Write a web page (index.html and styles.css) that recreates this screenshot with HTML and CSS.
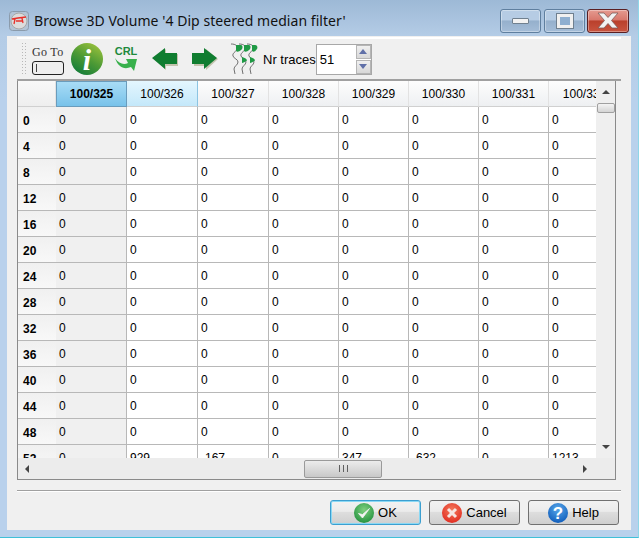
FILE: index.html
```html
<!DOCTYPE html>
<html>
	<head>
		<meta charset="UTF-8">
		<title>Browse 3D Volume</title>
		<link rel="stylesheet" href="styles.css">
	</head>
	<body>
		<div class="window">
			<div class="titlebar">
				<svg class="appicon" width="20" height="20" viewBox="0 0 20 20">
					<rect x="0.5" y="0.5" width="19" height="19" rx="3" fill="#b3c4d6" stroke="#8b9bab"/>
					<circle cx="10" cy="10" r="8" fill="#dcdcdc" stroke="#a8a8a8"/>
					<path d="M3 8 L9 7 L17 6 M6 8 L5 13 M13 7 L14 12 M7 10 L13 10" fill="none" stroke="#e8302a" stroke-width="1.3"/>
				</svg>
				<div class="titletext">Browse 3D Volume '4 Dip steered median filter'</div>
				<div class="winbtn winmin"><span class="minbar"></span></div>
				<div class="winbtn winmax"><span class="maxbox"></span></div>
				<div class="winbtn winclose">
					<svg width="26" height="18" viewBox="0 0 26 18">
						<path d="M3 1 H9 L13 5.5 L17 1 H23 L16.5 8.5 L23 16 H17 L13 11.5 L9 16 H3 L9.5 8.5 Z" fill="#f2f2f2" stroke="#7d5a58" stroke-width="0.8"/>
					</svg>
				</div>
			</div>

			<div class="client">
				<div class="toolbar">
					<div class="grip"></div>
					<div class="goto">
						<div class="gotolabel">Go To</div>
						<div class="gotofield"><span></span></div>
					</div>
					<svg class="tool-info" width="32" height="32" viewBox="0 0 32 32">
						<defs>
							<linearGradient id="infogreen" x1="0.8" y1="0" x2="0.2" y2="1">
								<stop offset="0" stop-color="#9cc23c"/>
								<stop offset="0.5" stop-color="#4d9a35"/>
								<stop offset="1" stop-color="#0f7a3a"/>
							</linearGradient>
						</defs>
						<circle cx="16" cy="16" r="16" fill="url(#infogreen)"/>
						<text x="16" y="27" text-anchor="middle" class="infoglyph">i</text>
					</svg>
					<svg class="tool-crl" width="24" height="28" viewBox="0 -1 24 28">
						<text x="12" y="9" text-anchor="middle" class="crlglyph">CRL</text>
						<path d="M1 12 C5 18 10 19 14 17 L12 13 L23 13 L20 25 L17 21 C10 24 4 21 1 12 Z" fill="#38b04c"/>
					</svg>
					<svg class="tool-arrow" width="28" height="24" viewBox="0 0 28 24">
						<path d="M3 12 L15 2 V7 H27 V19 H15 V23 Z" fill="#b8b89c" opacity="0.8"/>
						<path d="M1 11 L14 1 V6 H26 V17 H14 V22 Z" fill="#107d30"/>
					</svg>
					<svg class="tool-arrow tool-right" width="28" height="24" viewBox="0 0 28 24">
						<path d="M3 7 H15 V2 L27 12 L15 23 V19 H3 Z" fill="#b8b89c" opacity="0.8"/>
						<path d="M1 6 H13 V1 L26 11 L13 22 V17 H1 Z" fill="#107d30"/>
					</svg>
					<svg class="tool-traces" width="28" height="32" viewBox="0 0 28 32">
						<g fill="none" stroke="#707070" stroke-width="1">
							<path d="M1 1 C6 1 8 3 7 6 C6 9 2 10 3 13 C4 16 8 16 8 19 C8 22 4 23 4 26 L5 31"/>
							<path d="M9 1 C14 1 16 3 15 6 C14 9 10 10 11 13 C12 16 16 16 16 19 C16 22 12 23 12 26 L13 31"/>
							<path d="M17 1 C22 1 24 3 23 6 C22 9 18 10 19 13 C20 16 24 16 24 19 C24 22 20 23 20 26 L21 31"/>
						</g>
						<g fill="#1f9a45">
							<path d="M6 2 H11 C13 2 13 6 11 7 C9 9 7 9 6 8 Z"/>
							<path d="M14 2 H19 C21 2 21 6 19 7 C17 9 15 9 14 8 Z"/>
							<path d="M22 2 H25 C28 2 28 6 26 7 C25 9 23 9 22 8 Z"/>
							<path d="M12 14 C15 15 17 16 17 17.500 C15 19 13 20 12 20 Z"/>
							<path d="M20 14 C23 15 25 16 25 17.500 C23 19 21 20 20 20 Z"/>
						</g>
					</svg>
					<div class="nrlabel">Nr traces</div>
					<div class="spin">
						<div class="spinvalue">51</div>
						<div class="spinbtns">
							<div class="spinbtn"><span class="spinup"></span></div>
							<div class="spinbtn"><span class="spindown"></span></div>
						</div>
					</div>
				</div>

				<div class="tablebox">
					<div class="tablemain">
						<div class="tableview">
							<table>
								<colgroup>
									<col class="c-row"><col class="c-wide"><col class="c-wide"><col class="c-wide"><col class="c-std"><col class="c-std"><col class="c-std"><col class="c-std"><col class="c-last">
								</colgroup>
								<thead>
									<tr><th class="corner"></th><th class="current">100/325</th><th class="next">100/326</th><th>100/327</th><th>100/328</th><th>100/329</th><th>100/330</th><th>100/331</th><th>100/332</th></tr>
								</thead>
								<tbody>
									<tr><th>0</th><td class="curcol">0</td><td>0</td><td>0</td><td>0</td><td>0</td><td>0</td><td>0</td><td>0</td></tr>
									<tr><th>4</th><td class="curcol">0</td><td>0</td><td>0</td><td>0</td><td>0</td><td>0</td><td>0</td><td>0</td></tr>
									<tr><th>8</th><td class="curcol">0</td><td>0</td><td>0</td><td>0</td><td>0</td><td>0</td><td>0</td><td>0</td></tr>
									<tr><th>12</th><td class="curcol">0</td><td>0</td><td>0</td><td>0</td><td>0</td><td>0</td><td>0</td><td>0</td></tr>
									<tr><th>16</th><td class="curcol">0</td><td>0</td><td>0</td><td>0</td><td>0</td><td>0</td><td>0</td><td>0</td></tr>
									<tr><th>20</th><td class="curcol">0</td><td>0</td><td>0</td><td>0</td><td>0</td><td>0</td><td>0</td><td>0</td></tr>
									<tr><th>24</th><td class="curcol">0</td><td>0</td><td>0</td><td>0</td><td>0</td><td>0</td><td>0</td><td>0</td></tr>
									<tr><th>28</th><td class="curcol">0</td><td>0</td><td>0</td><td>0</td><td>0</td><td>0</td><td>0</td><td>0</td></tr>
									<tr><th>32</th><td class="curcol">0</td><td>0</td><td>0</td><td>0</td><td>0</td><td>0</td><td>0</td><td>0</td></tr>
									<tr><th>36</th><td class="curcol">0</td><td>0</td><td>0</td><td>0</td><td>0</td><td>0</td><td>0</td><td>0</td></tr>
									<tr><th>40</th><td class="curcol">0</td><td>0</td><td>0</td><td>0</td><td>0</td><td>0</td><td>0</td><td>0</td></tr>
									<tr><th>44</th><td class="curcol">0</td><td>0</td><td>0</td><td>0</td><td>0</td><td>0</td><td>0</td><td>0</td></tr>
									<tr><th>48</th><td class="curcol">0</td><td>0</td><td>0</td><td>0</td><td>0</td><td>0</td><td>0</td><td>0</td></tr>
									<tr><th>52</th><td class="curcol">0</td><td>929</td><td>-167</td><td>0</td><td>347</td><td>-632</td><td>0</td><td>1213</td></tr>
								</tbody>
							</table>
						</div>
						<div class="vscroll">
							<span class="arrow-up"></span>
							<div class="vthumb"></div>
							<span class="arrow-down"></span>
						</div>
					</div>
					<div class="hscroll">
						<span class="arrow-left"></span>
						<div class="hthumb"><span class="grips"></span></div>
						<span class="arrow-right"></span>
					</div>
				</div>

				<div class="separator"></div>

				<div class="buttons">
					<div class="btn btn-default">
						<svg width="20" height="20" viewBox="0 0 20 20">
							<defs>
								<radialGradient id="okgreen" cx="0.5" cy="0.35" r="0.7">
									<stop offset="0" stop-color="#7fd07f"/>
									<stop offset="1" stop-color="#1f8f3c"/>
								</radialGradient>
							</defs>
							<circle cx="10" cy="10" r="10" fill="url(#okgreen)"/>
							<path d="M4.5 10.5 L8.5 15 L15.5 5.5 L8.5 11.5 Z" fill="#f4f4f4" stroke="#f4f4f4" stroke-width="0.8"/>
						</svg>
						<span>OK</span>
					</div>
					<div class="btn">
						<svg width="20" height="20" viewBox="0 0 20 20">
							<defs>
								<radialGradient id="cancelred" cx="0.5" cy="0.35" r="0.7">
									<stop offset="0" stop-color="#f47a5c"/>
									<stop offset="1" stop-color="#e0281e"/>
								</radialGradient>
							</defs>
							<circle cx="10" cy="10" r="10" fill="url(#cancelred)"/>
							<path d="M6 6 L14 14 M14 6 L6 14" stroke="#f6e6e2" stroke-width="3"/>
						</svg>
						<span>Cancel</span>
					</div>
					<div class="btn">
						<svg width="20" height="20" viewBox="0 0 20 20">
							<defs>
								<radialGradient id="helpblue" cx="0.5" cy="0.3" r="0.75">
									<stop offset="0" stop-color="#58a8ea"/>
									<stop offset="1" stop-color="#0c58b8"/>
								</radialGradient>
							</defs>
							<circle cx="10" cy="10" r="10" fill="url(#helpblue)"/>
							<text x="10" y="16" text-anchor="middle" class="helpglyph">?</text>
						</svg>
						<span>Help</span>
					</div>
				</div>
			</div>
		</div>
	</body>
</html>
```

FILE: styles.css
```css
html, body {
	margin: 0;
	padding: 0;
}

body {
	width: 639px;
	height: 538px;
	overflow: hidden;
	background: #fff;
	font-family: "Liberation Sans", Arial, sans-serif;
	font-size: 12px;
	color: #000;
}

.window {
	box-sizing: border-box;
	width: 639px;
	height: 538px;
	padding: 0 7px 6px 7px;
	background: linear-gradient(to bottom, #9db9d6 0, #b4cce6 36px, #b9d1ec 100px);
	border-right: 1px solid #8fd6e8;
	border-bottom: 1px solid #3fc0d8;
}

/* title bar */
.titlebar {
	display: flex;
	align-items: flex-start;
	height: 36px;
	padding-top: 9px;
	box-sizing: border-box;
	margin-left: -7px;
	margin-right: -7px;
	padding-left: 9px;
	padding-right: 9px;
}

.appicon {
	flex: none;
	margin-top: 2px;
	margin-right: 5px;
}

.titletext {
	flex: 1;
	font-family: "Noto Sans", sans-serif;
	font-size: 14px;
	line-height: 24px;
	letter-spacing: 0.05px;
	color: #111;
	white-space: nowrap;
}

.winbtn {
	box-sizing: border-box;
	display: flex;
	align-items: center;
	justify-content: center;
	width: 41px;
	height: 24px;
	margin-left: 3px;
	border: 1px solid #5f7f9f;
	border-radius: 3px;
	box-shadow: inset 0 0 0 1px rgba(255, 255, 255, 0.35);
	background: linear-gradient(to bottom, #b6cce4 0, #b6cce4 45%, #95b0cc 50%, #a5bdd8 100%);
}

.winclose {
	width: 42px;
	margin-left: 2px;
	border-color: #5a1f22;
	background: linear-gradient(to bottom, #e59a90 0, #d8786c 45%, #b9402c 50%, #c9543f 100%);
}

.minbar {
	display: block;
	box-sizing: border-box;
	width: 17px;
	height: 6px;
	background: #f2f2f2;
	border: 1px solid #70808f;
	border-radius: 1px;
}

.maxbox {
	display: block;
	box-sizing: border-box;
	width: 16px;
	height: 14px;
	background: #8fafd0;
	border: 3px solid #f0f0f0;
	outline: 1px solid #70808f;
}

/* client area */
.client {
	height: 494px;
	box-sizing: border-box;
	padding: 1px 10px 0;
	background: #f0f0f0;
}

.toolbar {
	display: flex;
	align-items: center;
	box-sizing: border-box;
	height: 44px;
	padding-left: 4px;
	border-top: 2px solid #fff;
	border-bottom: 2px solid #a0a0a0;
}

.grip {
	width: 5px;
	height: 34px;
	margin-right: 6px;
	background-image: radial-gradient(#b8b8b8 1px, transparent 1px);
	background-size: 3px 3px;
}

.goto {
	width: 36px;
	margin-right: 3px;
	padding-top: 2px;
}

.gotolabel {
	font-family: "Liberation Serif", serif;
	font-size: 12px;
	line-height: 13px;
	color: #333;
	letter-spacing: 0.3px;
	white-space: nowrap;
}

.gotofield {
	box-sizing: border-box;
	display: flex;
	align-items: center;
	width: 32px;
	height: 14px;
	padding-left: 3px;
	margin-top: 2px;
	border: 1px solid #222;
	border-radius: 3px;
	background: #eee;
}

.gotofield span {
	width: 1px;
	height: 8px;
	background: #444;
}

.tool-info {
	flex: none;
}

.infoglyph {
	font-family: "Liberation Serif", serif;
	font-style: italic;
	font-weight: bold;
	font-size: 30px;
	fill: #fff;
}

.tool-crl {
	flex: none;
	margin-left: 11px;
}

.crlglyph {
	font-family: "Liberation Sans", sans-serif;
	font-weight: bold;
	font-size: 11px;
	fill: #1f8a3c;
}

.tool-arrow {
	flex: none;
	margin-left: 13px;
}

.tool-right {
	margin-left: 12px;
}

.tool-traces {
	flex: none;
	margin-left: 11px;
	margin-right: 5px;
}

.nrlabel {
	font-size: 13px;
	white-space: nowrap;
}

.spin {
	display: flex;
	box-sizing: border-box;
	width: 56px;
	height: 31px;
	border: 1px solid #a8a8a8;
	background: #fff;
}

.spinvalue {
	flex: 1;
	font-size: 13px;
	line-height: 29px;
	padding-left: 3px;
}

.spinbtns {
	display: flex;
	flex-direction: column;
	width: 15px;
	gap: 1px;
}

.spinbtn {
	flex: 1;
	display: flex;
	align-items: center;
	justify-content: center;
	border: 1px solid #b5b5b5;
	background: linear-gradient(to bottom, #f0f0f0, #d8d8d8);
}

.spinup {
	border-left: 4px solid transparent;
	border-right: 4px solid transparent;
	border-bottom: 5px solid #6070a8;
}

.spindown {
	border-left: 4px solid transparent;
	border-right: 4px solid transparent;
	border-top: 5px solid #6070a8;
}

/* table */
.tablebox {
	width: 599px;
	box-sizing: border-box;
	border: 1px solid #8a8a8a;
	border-top: 0;
}

.tablemain {
	display: flex;
	height: 377px;
}

.tableview {
	width: 578px;
	overflow: hidden;
	background: #fff;
}

table {
	table-layout: fixed;
	width: 603px;
	border-collapse: separate;
	border-spacing: 0;
	font-size: 12px;
}

.c-row { width: 38px; }
.c-wide { width: 71px; }
.c-std { width: 70px; }
.c-last { width: 72px; }

thead th {
	height: 26px;
	padding: 0;
	box-sizing: border-box;
	font-weight: normal;
	text-align: center;
	white-space: nowrap;
	overflow: hidden;
	background: linear-gradient(to bottom, #fdfdfd, #eef0f2);
	border-right: 1px solid #e2e2e2;
	border-bottom: 1px solid #d0d0d0;
}

thead th.corner {
	background: linear-gradient(to bottom, #f8f8f8, #eeeeee);
}

thead th.current {
	font-weight: bold;
	background: linear-gradient(to bottom, #a8dcf6, #78c2ea);
	border: 1px solid #6a9cbc;
}

thead th.next {
	background: linear-gradient(to bottom, #e4f6fe, #c4e8fa);
	border-right: 1px solid #8cc4e2;
}

tbody th {
	height: 26px;
	padding: 2px 0 0 5px;
	box-sizing: border-box;
	font-weight: bold;
	text-align: left;
	background: linear-gradient(to bottom, #f0f0f0, #f8f8f8);
	border-bottom: 1px solid #b8b8b8;
}

td {
	height: 26px;
	padding: 1px 0 0 3px;
	box-sizing: border-box;
	white-space: nowrap;
	border-right: 1px solid #b8b8b8;
	border-bottom: 1px solid #b8b8b8;
}

td.curcol {
	background: #f0f0f0;
}

/* scrollbars */
.vscroll {
	flex: none;
	display: flex;
	flex-direction: column;
	align-items: center;
	width: 19px;
	background: #efefef;
}

.arrow-up {
	margin-top: 9px;
	border-left: 4px solid transparent;
	border-right: 4px solid transparent;
	border-bottom: 4px solid #444;
}

.vthumb {
	box-sizing: border-box;
	width: 18px;
	height: 10px;
	margin-top: 9px;
	border: 1px solid #a0a0a0;
	border-radius: 2px;
	background: linear-gradient(to bottom, #f4f4f4, #d4d4d4);
}

.arrow-down {
	margin-top: auto;
	margin-bottom: 9px;
	border-left: 4px solid transparent;
	border-right: 4px solid transparent;
	border-top: 4px solid #444;
}

.hscroll {
	display: flex;
	align-items: center;
	box-sizing: border-box;
	height: 21px;
	padding-left: 7px;
	padding-right: 28px;
	background: #ececec;
}

.arrow-left {
	border-top: 4px solid transparent;
	border-bottom: 4px solid transparent;
	border-right: 4px solid #444;
}

.hthumb {
	display: flex;
	align-items: center;
	justify-content: center;
	box-sizing: border-box;
	width: 78px;
	height: 18px;
	margin-left: 275px;
	border: 1px solid #9a9a9a;
	border-radius: 2px;
	background: linear-gradient(to bottom, #ececec, #c8c8c8);
}

.grips {
	width: 9px;
	height: 7px;
	background-image: linear-gradient(to right, #606060 1px, transparent 1px);
	background-size: 4px 7px;
}

.arrow-right {
	margin-left: auto;
	border-top: 4px solid transparent;
	border-bottom: 4px solid transparent;
	border-left: 4px solid #444;
}

/* bottom */
.separator {
	margin-top: 10px;
	height: 1px;
	background: #a0a0a0;
	border-bottom: 1px solid #fff;
}

.buttons {
	display: flex;
	justify-content: flex-end;
	gap: 8px;
	margin-top: 8px;
	padding-right: 2px;
}

.btn {
	box-sizing: border-box;
	display: flex;
	align-items: center;
	justify-content: center;
	gap: 4px;
	width: 91px;
	height: 25px;
	font-size: 13px;
	border: 1px solid #707070;
	border-radius: 3px;
	background: linear-gradient(to bottom, #f2f2f2 0, #ebebeb 45%, #dddddd 50%, #cfcfcf 100%);
}

.btn-default {
	border: 1px solid #3c9fd0;
	box-shadow: inset 0 0 0 1px #8ad8f4;
}

.helpglyph {
	font-family: "Liberation Sans", sans-serif;
	font-weight: bold;
	font-size: 17px;
	fill: #fff;
}
```
